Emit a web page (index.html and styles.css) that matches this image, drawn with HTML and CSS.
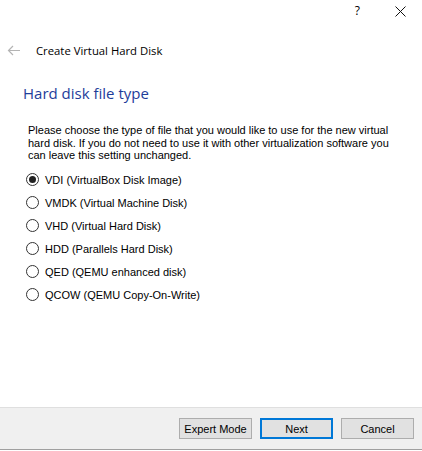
FILE: index.html
```html
<!DOCTYPE html>
<html>
<head>
<meta charset="utf-8">
<link rel="stylesheet" href="styles.css">
</head>
<body>
<div class="dialog">
  <div class="titlebar">
    <span class="tb-help">?</span>
    <span class="tb-close"><svg width="11" height="11" viewBox="0 0 11 11"><path d="M0.5 0.5 L10.5 10.5 M10.5 0.5 L0.5 10.5" stroke="#111" stroke-width="1" fill="none"/></svg></span>
  </div>
  <div class="wizard-head">
    <span class="back"><svg width="14" height="11" viewBox="0 0 14 11"><path d="M13 5.5 H1.5 M6 1 L1.5 5.5 L6 10" stroke="#b4b4b4" stroke-width="1.2" fill="none"/></svg></span>
    <span class="wizard-title">Create Virtual Hard Disk</span>
  </div>
  <div class="content">
    <h1 class="page-title">Hard disk file type</h1>
    <p class="desc">Please choose the type of file that you would like to use for the new virtual hard disk. If you do not need to use it with other virtualization software you can leave this setting unchanged.</p>
    <ul class="options">
      <li class="opt"><span class="radio checked"></span>VDI (VirtualBox Disk Image)</li>
      <li class="opt"><span class="radio"></span>VMDK (Virtual Machine Disk)</li>
      <li class="opt"><span class="radio"></span>VHD (Virtual Hard Disk)</li>
      <li class="opt"><span class="radio"></span>HDD (Parallels Hard Disk)</li>
      <li class="opt"><span class="radio"></span>QED (QEMU enhanced disk)</li>
      <li class="opt"><span class="radio"></span>QCOW (QEMU Copy-On-Write)</li>
    </ul>
  </div>
  <div class="footer">
    <button class="btn">Expert Mode</button>
    <button class="btn default">Next</button>
    <button class="btn">Cancel</button>
  </div>
</div>
</body>
</html>
```

FILE: styles.css
```css
html, body {
  margin: 0;
  padding: 0;
  background: #ffffff;
}
.dialog {
  width: 422px;
  height: 451px;
  display: flex;
  flex-direction: column;
  font-family: "Liberation Sans", Arial, sans-serif;
  color: #000;
}
.titlebar {
  height: 22px;
  display: flex;
  justify-content: flex-end;
  align-items: center;
  padding-right: 16px;
  gap: 35px;
  font-family: "Open Sans", sans-serif;
  font-size: 12px;
}
.tb-help {
  line-height: 1;
}
.tb-close {
  display: flex;
}
.wizard-head {
  display: flex;
  align-items: center;
  height: 20px;
  margin-top: 18px;
  padding-left: 7px;
}
.back {
  display: flex;
  width: 29px;
}
.wizard-title {
  font-family: "Open Sans", sans-serif;
  font-size: 11.3px;
  color: #000;
}
.content {
  padding-left: 23px;
  padding-right: 20px;
}
.page-title {
  margin: 22px 0 0 0;
  font-family: "Open Sans", sans-serif;
  font-weight: normal;
  font-size: 15px;
  line-height: 22px;
  color: #1e3d9a;
}
.desc {
  margin: 20px 0 0 5px;
  font-size: 11px;
  line-height: 12.7px;
  color: #000;
}
.options {
  list-style: none;
  margin: 6px 0 0 3px;
  padding: 0;
}
.opt {
  display: flex;
  align-items: center;
  height: 23px;
  font-size: 11px;
  gap: 6px;
}
.radio {
  width: 11px;
  height: 11px;
  border: 1px solid #333;
  border-radius: 50%;
  background: #fff;
  display: flex;
  align-items: center;
  justify-content: center;
  flex: none;
}
.radio.checked::after {
  content: "";
  width: 7px;
  height: 7px;
  border-radius: 50%;
  background: #222;
}
.footer {
  margin-top: auto;
  height: 41px;
  border-top: 1px solid #dfdfdf;
  border-bottom: 1px solid #a0a0a0;
  background: #f0f0f0;
  display: flex;
  align-items: center;
  justify-content: flex-end;
  gap: 8px;
  padding-right: 8px;
  margin-bottom: 1px;
}
.btn {
  width: 73px;
  height: 21px;
  border: 1px solid #adadad;
  background: #e1e1e1;
  font-family: "Liberation Sans", Arial, sans-serif;
  font-size: 11px;
  color: #000;
  padding: 0;
  margin: 0;
}
.btn.default {
  border: 2px solid #0078d7;
}
```
